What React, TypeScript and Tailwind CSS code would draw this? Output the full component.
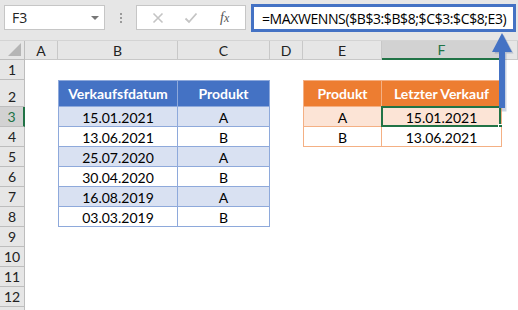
import React from 'react'

const cellFont = { fontFamily: 'Lato, "Liberation Sans", sans-serif' }

const columns = [
  { key: 'A', w: 'w-[33px]' },
  { key: 'B', w: 'w-[120px]' },
  { key: 'C', w: 'w-[92px]' },
  { key: 'D', w: 'w-[33px]' },
  { key: 'E', w: 'w-[79px]' },
  { key: 'F', w: 'w-[120px]' },
  { key: 'G', w: 'flex-1' },
]

const sales = [
  ['15.01.2021', 'A'],
  ['13.06.2021', 'B'],
  ['25.07.2020', 'A'],
  ['30.04.2020', 'B'],
  ['16.08.2019', 'A'],
  ['03.03.2019', 'B'],
]

const latest = [
  ['A', '15.01.2021'],
  ['B', '13.06.2021'],
]

function cellFor(row: number, col: string): { text?: string; cls: string } {
  const blueBorder = 'border-[#8ea9db] border-r border-b'
  const orangeBorder = 'border-[#f4b084] border-r border-b'

  if (row === 2) {
    if (col === 'B' || col === 'C')
      return {
        text: col === 'B' ? 'Verkaufsfdatum' : 'Produkt',
        cls: `${blueBorder} border-t bg-[#4472c4] font-bold text-white text-[14px] ${col === 'B' ? 'border-l' : ''}`,
      }
    if (col === 'E' || col === 'F')
      return {
        text: col === 'E' ? 'Produkt' : 'Letzter Verkauf',
        cls: `${orangeBorder} border-t bg-[#ed7d31] font-bold text-white text-[14px] ${col === 'E' ? 'border-l' : ''}`,
      }
  }

  if (row >= 3 && row <= 8 && (col === 'B' || col === 'C')) {
    const item = sales[row - 3]
    return {
      text: col === 'B' ? item[0] : item[1],
      cls: `${blueBorder} ${row % 2 === 1 ? 'bg-[#d9e1f2]' : 'bg-white'} text-[14px] text-black pt-[2px] ${col === 'B' ? 'border-l' : ''}`,
    }
  }

  if (row >= 3 && row <= 4 && (col === 'E' || col === 'F')) {
    const item = latest[row - 3]
    return {
      text: col === 'E' ? item[0] : item[1],
      cls: `${orangeBorder} ${row === 3 ? 'bg-[#fce4d6]' : 'bg-white'} text-[14px] text-black pt-[2px] ${col === 'E' ? 'border-l' : ''}`,
    }
  }

  return { cls: 'bg-white' }
}

function TopBar() {
  return (
    <div className="relative flex h-10 items-start bg-[#e6e6e6]">
      <div className="ml-1 mt-[5px] flex h-[25px] w-[101px] shrink-0 items-center justify-between border border-[#c6c6c6] bg-white pl-[7px] pr-[5px]">
        <span className="text-[14px] text-[#222]" style={{ fontFamily: '"Open Sans", sans-serif' }}>
          F3
        </span>
        <span className="h-0 w-0 border-x-[4px] border-t-[4px] border-x-transparent border-t-[#777]" />
      </div>
      <div className="ml-[15px] mt-[13px] flex shrink-0 flex-col gap-[2px]">
        <span className="size-[2px] bg-[#9a9a9a]" />
        <span className="size-[2px] bg-[#9a9a9a]" />
        <span className="size-[2px] bg-[#9a9a9a]" />
      </div>
      <div className="ml-[14px] mt-[5px] flex h-[25px] w-[110px] shrink-0 items-center border border-[#c6c6c6] bg-white">
        <svg width="12" height="12" viewBox="0 0 12 12" className="ml-[15px]">
          <path d="M1.5 1.5l9 9M10.5 1.5l-9 9" stroke="#c4c4c4" strokeWidth="1.6" />
        </svg>
        <svg width="14" height="12" viewBox="0 0 14 12" className="ml-[20px]">
          <path d="M1.5 6.5l3.5 3.5 7.5-8.5" stroke="#c4c4c4" strokeWidth="1.8" fill="none" />
        </svg>
        <span
          className="ml-[22px] text-[14px] italic text-[#555]"
          style={{ fontFamily: '"Liberation Serif", serif' }}
        >
          f<span className="text-[12px]">x</span>
        </span>
      </div>
      <div className="ml-[5px] mr-[2px] mt-1 flex h-[28px] min-w-0 flex-1 items-center overflow-hidden border-[3px] border-[#4472c4] bg-white pl-[8px]">
        <span
          className="whitespace-nowrap text-[14px] tracking-[-0.4px] text-black"
          style={{ fontFamily: '"Open Sans", sans-serif' }}
        >
          =MAXWENNS($B$3:$B$8;$C$3:$C$8;E3)
        </span>
      </div>
    </div>
  )
}

function ColumnHeader() {
  return (
    <div className="flex h-5 border-t border-[#d4d4d4] bg-[#e6e6e6]" style={cellFont}>
      <div className="relative w-[25px] shrink-0 border-b border-r border-[#bdbdbd]">
        <span className="absolute bottom-[3px] right-[3px] h-0 w-0 border-b-[13px] border-l-[13px] border-b-[#b5b5b5] border-l-transparent" />
      </div>
      {columns.map((c) => {
        const active = c.key === 'F'
        return (
          <div
            key={c.key}
            className={`${c.w} flex shrink-0 items-center justify-center text-[14px] ${
              active
                ? 'border-b-2 border-r border-b-[#217346] border-r-[#bdbdbd] bg-[#d2d2d2] text-[#217346]'
                : 'border-b border-r border-[#c8c8c8] text-[#222]'
            }`}
          >
            {c.key === 'G' ? '' : c.key}
          </div>
        )
      })}
    </div>
  )
}

function SheetRow({ row, label = true }: { row: number; label?: boolean }) {
  const height = row === 2 ? 'h-[27px]' : 'h-5'
  const active = row === 3
  return (
    <div className={`flex ${height}`} style={cellFont}>
      <div
        className={`flex w-[25px] shrink-0 items-end justify-center pb-[1px] text-[14px] leading-4 ${
          active
            ? 'border-b border-r-2 border-b-[#bdbdbd] border-r-[#217346] bg-[#d2d2d2] text-[#217346]'
            : 'border-b border-r border-[#bdbdbd] bg-[#e6e6e6] text-[#222]'
        }`}
      >
        {label ? row : ''}
      </div>
      {columns.map((c) => {
        const cell = cellFor(row, c.key)
        const selected = row === 3 && c.key === 'F'
        return (
          <div
            key={c.key}
            className={`${c.w} relative flex shrink-0 items-center justify-center ${cell.cls}`}
          >
            {cell.text}
            {selected && (
              <>
                <span className="absolute -left-[1px] -top-[1px] bottom-[-1px] right-0 border-2 border-[#217346]" />
                <span className="absolute -bottom-[4px] -right-[3px] size-[6px] border border-white bg-[#217346]" />
              </>
            )}
          </div>
        )
      })}
    </div>
  )
}

function Arrow() {
  return (
    <svg
      className="absolute left-[490px] top-[32px]"
      width="26"
      height="80"
      viewBox="0 0 26 80"
    >
      <path d="M10 78V20H3L12 1l10 19h-7v58z" fill="#2f4f8a" opacity="0.25" transform="translate(1.5 1.5)" />
      <path d="M9 76V20H2L12 1l10 19h-7v56z" fill="#4472c4" />
    </svg>
  )
}

export default function App() {
  const rows = Array.from({ length: 12 }, (_, i) => i + 1)
  return (
    <div className="relative h-[310px] w-[518px] overflow-hidden bg-white">
      <TopBar />
      <ColumnHeader />
      {rows.map((r) => (
        <SheetRow key={r} row={r} />
      ))}
      <SheetRow row={13} label={false} />
      <Arrow />
    </div>
  )
}
